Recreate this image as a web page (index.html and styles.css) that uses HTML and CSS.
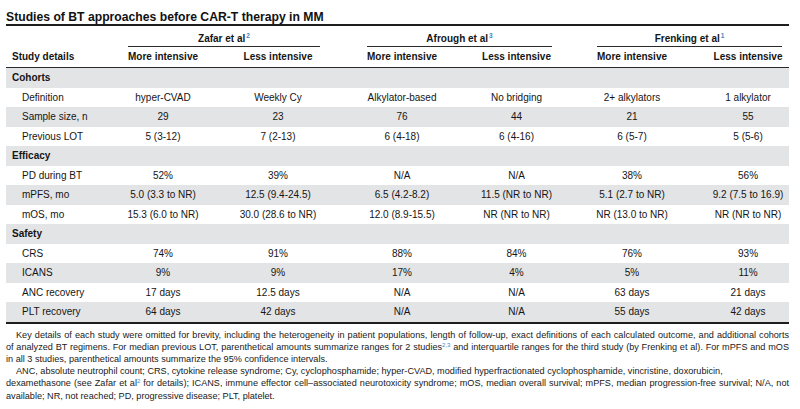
FILE: index.html
```html
<!DOCTYPE html>
<html>
<head>
<meta charset="utf-8">
<link rel="stylesheet" href="styles.css">
</head>
<body>
<div class="page">
  <h1 class="title">Studies of BT approaches before CAR-T therapy in MM</h1>
  <table class="tbl">
    <colgroup>
      <col class="w1"><col class="w2"><col class="w3"><col class="w4"><col class="w5"><col class="w6"><col class="w7">
    </colgroup>
    <thead>
      <tr class="grp">
        <th></th>
        <th colspan="2"><div class="gl gl-z">Zafar et al<sup>2</sup></div></th>
        <th colspan="2"><div class="gl gl-a">Afrough et al<sup>3</sup></div></th>
        <th colspan="2"><div class="gl gl-f">Frenking et al<sup>1</sup></div></th>
      </tr>
      <tr class="hdr">
        <th class="lbl">Study details</th>
        <th>More intensive</th>
        <th class="p3">Less intensive</th>
        <th class="p4">More intensive</th>
        <th>Less intensive</th>
        <th>More intensive</th>
        <th class="p7">Less intensive</th>
      </tr>
    </thead>
    <tbody>
      <tr class="g sec"><td class="lbl" colspan="7">Cohorts</td></tr>
      <tr><td class="sub">Definition</td><td>hyper-CVAD</td><td class="p3">Weekly Cy</td><td class="p4">Alkylator-based</td><td>No bridging</td><td>2+ alkylators</td><td class="p7">1 alkylator</td></tr>
      <tr class="g"><td class="sub">Sample size, n</td><td>29</td><td class="p3">23</td><td class="p4">76</td><td>44</td><td>21</td><td class="p7">55</td></tr>
      <tr><td class="sub">Previous LOT</td><td>5 (3-12)</td><td class="p3">7 (2-13)</td><td class="p4">6 (4-18)</td><td>6 (4-16)</td><td>6 (5-7)</td><td class="p7">5 (5-6)</td></tr>
      <tr class="g sec"><td class="lbl" colspan="7">Efficacy</td></tr>
      <tr><td class="sub">PD during BT</td><td>52%</td><td class="p3">39%</td><td class="p4">N/A</td><td>N/A</td><td>38%</td><td class="p7">56%</td></tr>
      <tr class="g"><td class="sub">mPFS, mo</td><td>5.0 (3.3 to NR)</td><td class="p3">12.5 (9.4-24.5)</td><td class="p4">6.5 (4.2-8.2)</td><td>11.5 (NR to NR)</td><td>5.1 (2.7 to NR)</td><td class="p7">9.2 (7.5 to 16.9)</td></tr>
      <tr><td class="sub">mOS, mo</td><td>15.3 (6.0 to NR)</td><td class="p3">30.0 (28.6 to NR)</td><td class="p4">12.0 (8.9-15.5)</td><td>NR (NR to NR)</td><td>NR (13.0 to NR)</td><td class="p7">NR (NR to NR)</td></tr>
      <tr class="g sec"><td class="lbl" colspan="7">Safety</td></tr>
      <tr><td class="sub">CRS</td><td>74%</td><td class="p3">91%</td><td class="p4">88%</td><td>84%</td><td>76%</td><td class="p7">93%</td></tr>
      <tr class="g"><td class="sub">ICANS</td><td>9%</td><td class="p3">9%</td><td class="p4">17%</td><td>4%</td><td>5%</td><td class="p7">11%</td></tr>
      <tr><td class="sub">ANC recovery</td><td>17 days</td><td class="p3">12.5 days</td><td class="p4">N/A</td><td>N/A</td><td>63 days</td><td class="p7">21 days</td></tr>
      <tr class="g"><td class="sub">PLT recovery</td><td>64 days</td><td class="p3">42 days</td><td class="p4">N/A</td><td>N/A</td><td>55 days</td><td class="p7">42 days</td></tr>
    </tbody>
  </table>
  <div class="notes">
    <p class="note">
      <span class="ln j ind">Key details of each study were omitted for brevity, including the heterogeneity in patient populations, length of follow-up, exact definitions of each calculated outcome, and additional cohorts</span>
      <span class="ln j">of analyzed BT regimens. For median previous LOT, parenthetical amounts summarize ranges for 2 studies<sup>2,3</sup> and interquartile ranges for the third study (by Frenking et al). For mPFS and mOS</span>
      <span class="ln">in all 3 studies, parenthetical amounts summarize the 95% confidence intervals.</span>
    </p>
    <p class="note">
      <span class="ln ind">ANC, absolute neutrophil count; CRS, cytokine release syndrome; Cy, cyclophosphamide; hyper-CVAD, modified hyperfractionated cyclophosphamide, vincristine, doxorubicin,</span>
      <span class="ln j">dexamethasone (see Zafar et al<sup>2</sup> for details); ICANS, immune effector cell–associated neurotoxicity syndrome; mOS, median overall survival; mPFS, median progression-free survival; N/A, not</span>
      <span class="ln">available; NR, not reached; PD, progressive disease; PLT, platelet.</span>
    </p>
  </div>
</div>
</body>
</html>
```
FILE: styles.css
```css
* { box-sizing: border-box; }
html, body { margin: 0; padding: 0; background: #ffffff; }
body {
  font-family: "Liberation Sans", Arial, Helvetica, sans-serif;
  color: #151515;
}
.page {
  width: 800px;
  padding: 10px 11px 0 6px;
}
.title {
  margin: 0;
  font-size: 12.2px;
  line-height: 14px;
  font-weight: bold;
  color: #111;
}
.tbl {
  width: 783px;
  table-layout: fixed;
  border-collapse: separate;
  border-spacing: 0;
  border-top: 2px solid #1e1e1e;
  border-bottom: 2px solid #1e1e1e;
  font-size: 10px;
}
.w1 { width: 100px; }
.w2 { width: 114px; }
.w3 { width: 120px; }
.w4 { width: 119px; }
.w5 { width: 115px; }
.w6 { width: 116px; }
.w7 { width: 99px; }

.tbl th { font-weight: bold; padding: 0; white-space: nowrap; }
.grp th { height: 21px; vertical-align: top; text-align: center; }
.gl {
  padding-top: 6px;
  line-height: 13px;
  padding-bottom: 1px;
  border-bottom: 1px solid #2a2a2a;
}
.gl-z { margin: 0 20px 0 22px; }
.gl-a { margin: 0 22px 0 27px; }
.gl-f { margin: 0 7px 0 23px; }
.tbl sup, .note sup {
  color: #3b87c4;
  font-size: 6.5px;
  line-height: 0;
  vertical-align: 4px;
  margin-left: 1px;
}
.hdr th {
  height: 20px;
  line-height: 20px;
  text-align: center;
  border-bottom: 1px solid #2a2a2a;
}
.hdr th.lbl { text-align: left; padding-left: 6px; }

.tbl td {
  height: 19.5px;
  line-height: 19.5px;
  padding: 0;
  text-align: center;
  white-space: nowrap;
}
.tbl tr.g td { background: #e3e4e6; }
.tbl td.lbl { text-align: left; padding-left: 6px; font-weight: bold; }
.tbl td.sub { text-align: left; padding-left: 16px; }
.p3 { padding-right: 4px !important; }
.p4 { padding-left: 5px !important; }
.p7 { padding-left: 17px !important; }

.notes { margin-top: 5px; font-size: 9.15px; line-height: 12.2px; color: #1a1a1a; }
.note { margin: 0; }
.ln { display: block; white-space: nowrap; }
.ln.j { text-align: justify; text-align-last: justify; }
.ln.ind { padding-left: 10px; }
.note sup { font-size: 6px; vertical-align: 3px; margin-left: 0; }
```
